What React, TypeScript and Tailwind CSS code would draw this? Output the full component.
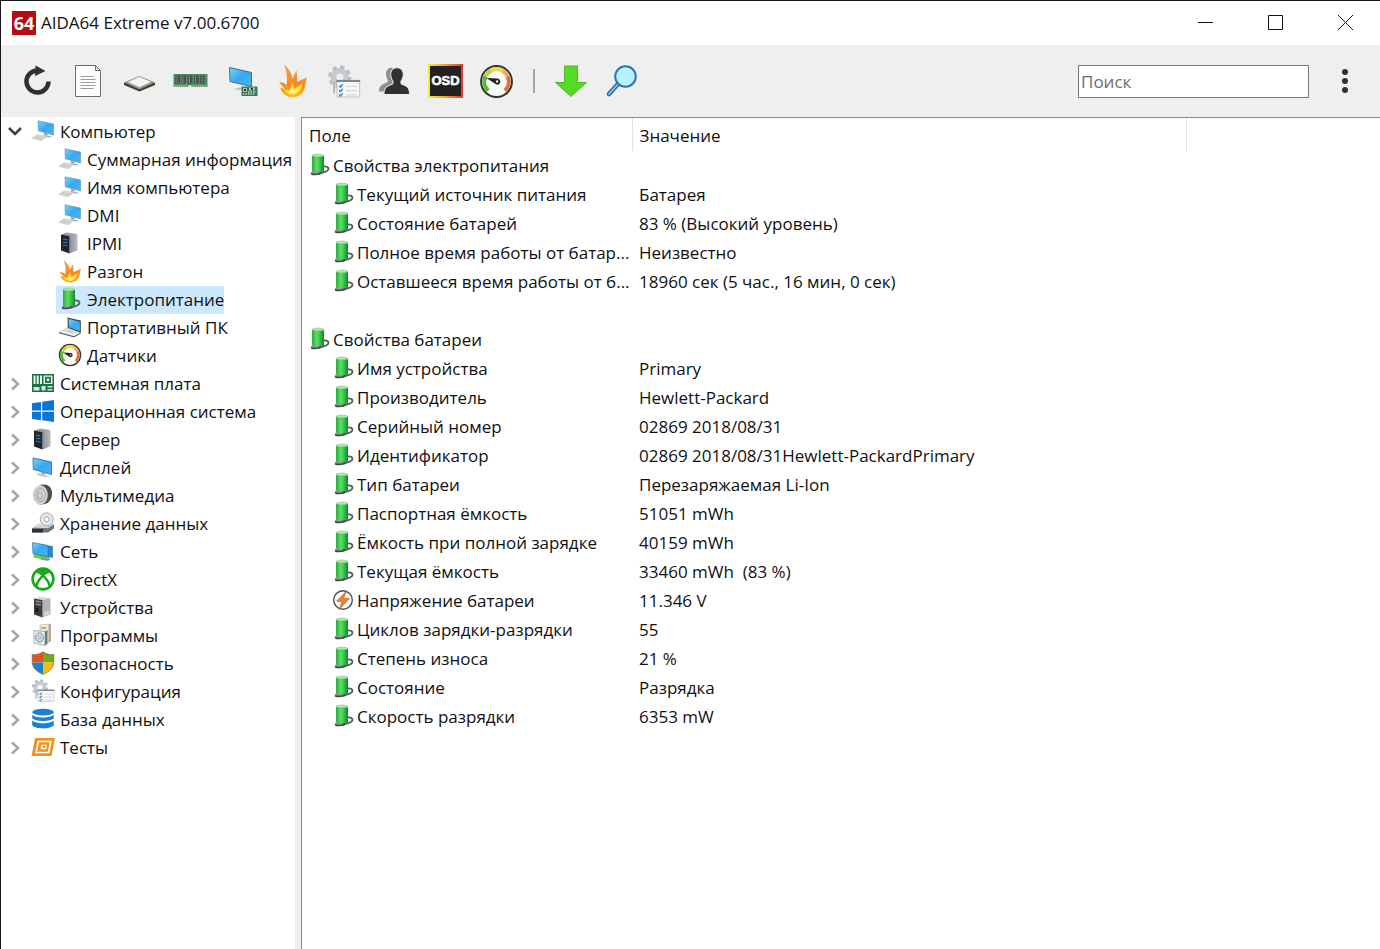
import React, { useState } from 'react';

type IconName =
  | 'computer'
  | 'server'
  | 'flame'
  | 'battery'
  | 'laptop'
  | 'gauge'
  | 'motherboard'
  | 'windows'
  | 'display'
  | 'speaker'
  | 'storage'
  | 'network'
  | 'xbox'
  | 'devices'
  | 'programs'
  | 'shield'
  | 'config'
  | 'database'
  | 'tests'
  | 'voltage';

interface TreeNode {
  label: string;
  icon: IconName;
  children?: TreeNode[];
}

interface Row {
  field: string;
  value?: string;
  icon?: IconName;
  group?: boolean;
}

const tree: TreeNode[] = [
  {
    label: 'Компьютер',
    icon: 'computer',
    children: [
      { label: 'Суммарная информация', icon: 'computer' },
      { label: 'Имя компьютера', icon: 'computer' },
      { label: 'DMI', icon: 'computer' },
      { label: 'IPMI', icon: 'server' },
      { label: 'Разгон', icon: 'flame' },
      { label: 'Электропитание', icon: 'battery' },
      { label: 'Портативный ПК', icon: 'laptop' },
      { label: 'Датчики', icon: 'gauge' },
    ],
  },
  { label: 'Системная плата', icon: 'motherboard' },
  { label: 'Операционная система', icon: 'windows' },
  { label: 'Сервер', icon: 'server' },
  { label: 'Дисплей', icon: 'display' },
  { label: 'Мультимедиа', icon: 'speaker' },
  { label: 'Хранение данных', icon: 'storage' },
  { label: 'Сеть', icon: 'network' },
  { label: 'DirectX', icon: 'xbox' },
  { label: 'Устройства', icon: 'devices' },
  { label: 'Программы', icon: 'programs' },
  { label: 'Безопасность', icon: 'shield' },
  { label: 'Конфигурация', icon: 'config' },
  { label: 'База данных', icon: 'database' },
  { label: 'Тесты', icon: 'tests' },
];

const rows: Row[] = [
  { field: 'Свойства электропитания', group: true },
  { field: 'Текущий источник питания', value: 'Батарея' },
  { field: 'Состояние батарей', value: '83 % (Высокий уровень)' },
  { field: 'Полное время работы от батар...', value: 'Неизвестно' },
  {
    field: 'Оставшееся время работы от б...',
    value: '18960 сек (5 час., 16 мин, 0 сек)',
  },
  { field: '' },
  { field: 'Свойства батареи', group: true },
  { field: 'Имя устройства', value: 'Primary' },
  { field: 'Производитель', value: 'Hewlett-Packard' },
  { field: 'Серийный номер', value: '02869 2018/08/31' },
  { field: 'Идентификатор', value: '02869 2018/08/31Hewlett-PackardPrimary' },
  { field: 'Тип батареи', value: 'Перезаряжаемая Li-Ion' },
  { field: 'Паспортная ёмкость', value: '51051 mWh' },
  { field: 'Ёмкость при полной зарядке', value: '40159 mWh' },
  { field: 'Текущая ёмкость', value: '33460 mWh  (83 %)' },
  { field: 'Напряжение батареи', value: '11.346 V', icon: 'voltage' },
  { field: 'Циклов зарядки-разрядки', value: '55' },
  { field: 'Степень износа', value: '21 %' },
  { field: 'Состояние', value: 'Разрядка' },
  { field: 'Скорость разрядки', value: '6353 mW' },
];

// Gradients shared by all icons
const IconDefs = () => (
  <svg className="absolute size-0" aria-hidden="true">
    <defs>
      <linearGradient id="screen" x1="0" y1="0" x2="1" y2="1">
        <stop offset="0" stopColor="#7fd0fa" />
        <stop offset="0.5" stopColor="#35a9f0" />
        <stop offset="1" stopColor="#4fb4ef" />
      </linearGradient>
      <linearGradient id="cell" x1="0" y1="0" x2="1" y2="0">
        <stop offset="0" stopColor="#2fa844" />
        <stop offset="0.4" stopColor="#5ae064" />
        <stop offset="0.7" stopColor="#2fc045" />
        <stop offset="1" stopColor="#168029" />
      </linearGradient>
      <linearGradient id="fire" x1="0" y1="0" x2="0" y2="1">
        <stop offset="0" stopColor="#f2a25a" />
        <stop offset="0.6" stopColor="#f9861c" />
        <stop offset="1" stopColor="#fdb51a" />
      </linearGradient>
      <linearGradient id="metal" x1="0" y1="0" x2="1" y2="0">
        <stop offset="0" stopColor="#8b8f94" />
        <stop offset="1" stopColor="#b9bcc0" />
      </linearGradient>
      <linearGradient id="osd" x1="0" y1="0" x2="1" y2="0">
        <stop offset="0" stopColor="#f4ea3a" />
        <stop offset="0.5" stopColor="#f0a030" />
        <stop offset="1" stopColor="#d83a34" />
      </linearGradient>
      <radialGradient id="cone">
        <stop offset="0" stopColor="#8a8a8a" />
        <stop offset="0.3" stopColor="#ececec" />
        <stop offset="0.7" stopColor="#b4b4b4" />
        <stop offset="1" stopColor="#f2f2f2" />
      </radialGradient>
    </defs>
  </svg>
);

const Flame = () => (
  <>
    <path
      d="M5.500 1c4 3 6 6.500 6.300 10L15 5c.3 3 .5 5.500.6 8L23 10c-1 2.500-1 4-1.500 6.500-1 4.500-4.500 7-9.500 7s-8.500-3-9.500-6.500c1.500.3 2.500.6 3.500 1.300L1.500 13c2 .3 4 .8 6 2.200C8 10 7.500 5.500 5.500 1z"
      fill="url(#fire)"
    />
    <path
      d="M11.500 12.500l2 5.500 6-4c-.5 4.500-3 7.500-7 8-3.500 0-5.500-1.500-7-3.500 2 .1 3 .3 3.700.8 1.500-2.300 2.300-4.300 2.300-6.800z"
      fill="#ffe03c"
    />
    <path d="M11.500 17l1.500 2.500 3-1.500c-1 2-2.300 2.800-3.800 2.800-1.200 0-2-.4-2.700-1.100z" fill="#fff4a8" />
  </>
);

const Gauge = () => (
  <>
    <circle cx="12" cy="12" r="10.600" fill="#fbfbf7" stroke="#34322c" strokeWidth="1.300" />
    <g fill="none" strokeWidth="2.800">
      <path d="M6.300 18.200A8.400 8.400 0 0 1 4.500 8.400" stroke="#56b83c" />
      <path d="M4.500 8.400A8.400 8.400 0 0 1 8.400 4.400" stroke="#b8d24a" />
      <path d="M8.400 4.400A8.400 8.400 0 0 1 16.200 4.700" stroke="#f4d64c" />
      <path d="M16.200 4.700A8.400 8.400 0 0 1 19.600 8.500" stroke="#f3a95c" />
      <path d="M19.600 8.500A8.400 8.400 0 0 1 17.700 18.200" stroke="#dc7242" />
    </g>
    <path d="M5 9.600l7.700.4a2.100 2.100 0 1 1-1.800 3.400z" fill="#25231f" />
    <circle cx="12.400" cy="12" r=".8" fill="#eee" />
  </>
);

const Config = () => (
  <>
    <circle cx="9" cy="8.500" r="4.500" fill="none" stroke="#c6cbd1" strokeWidth="4" />
    <circle
      cx="9"
      cy="8.500"
      r="7"
      fill="none"
      stroke="#b8bec5"
      strokeWidth="2.400"
      strokeDasharray="3 2.500"
    />
    <path d="M5 12v8" stroke="#9aa0a7" />
    <path d="M7 11.500h16v11H7z" fill="#f6f8fa" stroke="#b5babf" strokeWidth=".6" />
    <path d="M6.600 10.500h16.800v1.500H6.600z" fill="#7f868d" />
    <g fill="none" stroke="#3f8fce" strokeWidth="1.100">
      <path d="M8.500 14.500l1 1 1.600-2M8.500 17.700l1 1 1.600-2M8.500 20.800l1 1 1.600-2" />
    </g>
    <path d="M13.500 15h7.500M13.500 18h7.500M13.500 21h7.500" stroke="#d0d4d8" strokeWidth=".8" />
  </>
);

const Tower = ({ light }: { light?: boolean }) => (
  <>
    <path d="M3 3.500L9 1.500l10.500 1.700-6 2.300z" fill={light ? '#dcdcdc' : '#9da0a5'} />
    <path d="M11.500 5l8-1.800v16l-8 3.300z" fill={light ? '#b5b5b5' : 'url(#metal)'} />
    <path d="M3 3.500L11.500 5v17.500L3 19.500z" fill={light ? '#3c3c3a' : '#20242c'} />
    {light ? (
      <>
        <path d="M4.500 6l5.500 1M4.500 9l5.500 1" stroke="#8d8d8d" strokeWidth="1.400" />
        <path d="M4.500 12.500l3 .6v4.500l-3-.9z" fill="#1b1b1b" />
        <path d="M13 17l5.500-1.800v3.600l-5.500 2z" fill="#d6d6d6" />
      </>
    ) : (
      <path d="M5 8l4.500.9M5 11l4.500.9M5 14l4.500 1" stroke="#2e7bb4" strokeWidth="1.200" />
    )}
  </>
);

const glyphs: Record<IconName, React.ReactNode> = {
  computer: (
    <>
      <path d="M7 1.800L22.600 5v11L7.300 11.800z" fill="url(#screen)" stroke="#5b8fae" strokeWidth=".6" />
      <path d="M13 14l3.500.8v2l-3.500-1z" fill="#8e979e" />
      <path d="M11 16l8 1 2.500 1.200-5 .2z" fill="#adb3b8" />
      <path d="M6 15.800l9.500 1.900-5.500 4L.8 19.300z" fill="#dde0de" stroke="#b0b5b3" strokeWidth=".5" />
      <path d="M4.500 17.300l8.800 2M3 18.500l8.600 2" stroke="#a9b0ad" strokeWidth=".5" />
    </>
  ),
  laptop: (
    <>
      <path d="M9.500 2.500l13.300 3V18L9.800 13z" fill="#3c454e" />
      <path d="M10.600 4l11.200 2.700v9.600l-10.900-4z" fill="url(#screen)" />
      <path d="M9.300 13l13.200 5-6.500 3.500L1 17.500z" fill="#eceef0" stroke="#9ba1a6" strokeWidth=".6" />
      <path d="M9.500 14.500l8.500 3-2.500 1.200-9-2.600z" fill="#c8cdd1" />
      <path d="M1 17.800l15 4 6.500-3.500" fill="none" stroke="#50585f" />
    </>
  ),
  server: <Tower />,
  devices: <Tower light />,
  flame: <Flame />,
  battery: (
    <>
      <path d="M4 19c2-1.600 6-2.500 10-1.900l5 1.500-6 3.400-8-.4z" fill="#8b958f" />
      <path
        d="M16 13.500c4-.5 5.500.7 5.500 2.300 0 2-3.500 3.500-9 4.300"
        fill="none"
        stroke="#56605b"
        strokeWidth="1.900"
      />
      <path d="M5 2.500h12V18c-1.500 1.500-10.400 1.500-12 0z" fill="url(#cell)" />
      <ellipse cx="11" cy="2.500" rx="6" ry="1.400" fill="#b4e6b2" stroke="#6cb870" strokeWidth=".5" />
      <path d="M4 20.500c2 1.500 7 1.500 10-.8" fill="none" stroke="#3f4a44" strokeWidth="1.600" />
    </>
  ),
  gauge: <Gauge />,
  motherboard: (
    <>
      <path d="M1 3h22v18H1z" fill="#1d7044" />
      <path d="M2.500 4.500h2V13h-2zM5.700 4.500h2V13h-2zM9 4.500h2V13H9z" fill="#e8f2e9" />
      <path d="M12.500 4.500h9v8.500h-9z" fill="#e8f2e9" />
      <path d="M14 5.800h6v6h-6z" fill="#1d7044" />
      <path d="M15.700 7.500h2.600v2.600h-2.600z" fill="#e8f2e9" />
      <path d="M2.500 16h6v3.500h-6zM10.500 15h4v4.500h-4zM16.500 15h5v1.600h-5zM16.500 18h5v1.500h-5z" fill="#d5e8d8" />
    </>
  ),
  windows: (
    <path
      d="M1 4.200l9-1.300v8.600H1zM11.200 2.700L23 1v10.500H11.200zM1 12.700h9v8.500l-9-1.300zM11.200 12.700H23V23l-11.800-1.700z"
      fill="#0a76d0"
    />
  ),
  display: (
    <>
      <path d="M2 3l18.500 4v12.500L2.300 14.300z" fill="url(#screen)" stroke="#39749c" strokeWidth=".9" />
      <path d="M5 17.500l14 4-4 .7-8-1.900z" fill="#c3c9cd" />
      <path d="M10 16.800l4 1v2l-4-1z" fill="#98a1a8" />
    </>
  ),
  speaker: (
    <>
      <path d="M9 2c7-1.500 12 1 12 8.500S16 22 9 21.500z" fill="#4e4e4e" />
      <ellipse cx="9.500" cy="12" rx="7" ry="9.500" fill="url(#cone)" stroke="#b5b5b5" strokeWidth=".8" />
      <ellipse cx="9" cy="12.500" rx="2.500" ry="3.400" fill="#d4d4d4" stroke="#8f8f8f" strokeWidth=".8" />
    </>
  ),
  storage: (
    <>
      <path d="M1 17.500L8 13l15 .5v4L17 21.500H1z" fill="#6d7276" />
      <path d="M1 16.500l7-4 15 .8-6 4z" fill="#d5d8da" />
      <path d="M1 18h11v3.500H1z" fill="#303336" />
      <circle cx="15.700" cy="8.300" r="6.500" fill="#e4e7e9" stroke="#a7adb2" />
      <circle cx="15.700" cy="8.300" r="2.400" fill="#fff" stroke="#9da4a9" />
    </>
  ),
  network: (
    <>
      <path d="M2.500 14l16 4v3.500l-16-3z" fill="#63cf45" />
      <path d="M9 5.500l12.500 2v11L9 16z" fill="#2389d2" stroke="#216a9c" strokeWidth=".6" />
      <path d="M1.500 3.500L17 6.500v11L2 14.500z" fill="url(#screen)" stroke="#3a7ca8" strokeWidth=".8" />
      <path d="M12 19l8 1.500-4 1.200-7-1.300z" fill="#81959a" />
    </>
  ),
  xbox: (
    <>
      <circle cx="12" cy="12" r="10.400" fill="#fff" stroke="#18a818" strokeWidth="2.600" />
      <path
        d="M5.300 4.800c2.500 0 4.700 1.500 6.700 3.200 2-1.700 4.200-3.200 6.700-3.200M5 19.500c1-4 3.500-7.800 7-10.900 3.500 3.100 6 6.900 7 10.900"
        fill="none"
        stroke="#18a818"
        strokeWidth="2.600"
      />
      <path d="M7 3.500Q12 1 17 3.500L12 7z" fill="#18a818" />
    </>
  ),
  programs: (
    <>
      <path d="M9 2l10-1v17l-4 2-6-1z" fill="#efe8d8" stroke="#b3afa2" strokeWidth=".6" />
      <path d="M17.500 1.500l2.500-.5v17l-2.500 2z" fill="#b0a896" />
      <path d="M3 7.500l11 1v14L3 20z" fill="#edf0f1" stroke="#8b9399" strokeWidth=".7" />
      <path d="M14 8.500L16.500 7v14L14 22.500z" fill="#6f777e" />
      <ellipse cx="8.500" cy="14.500" rx="3.900" ry="4.600" fill="#c8dbe8" stroke="#8093a2" />
      <circle cx="8.500" cy="14.500" r="1.300" fill="#fff" stroke="#6d8191" strokeWidth=".6" />
      <path d="M10 4h5v1.800h-5z" fill="#d0a557" />
    </>
  ),
  shield: (
    <>
      <path d="M12 .8C9 3 5.500 3.800 1.200 3.600V11.500H12z" fill="#e8501f" />
      <path d="M12 .8c3 2.200 6.500 3 10.800 2.800V11.500H12z" fill="#6cab1b" />
      <path d="M1.200 11.500H12v12C6 20.500 1.500 17 1.200 11.500z" fill="#1d82cc" />
      <path d="M22.800 11.500H12v12c6-3 10.500-6.500 10.800-12z" fill="#fbb914" />
      <path
        d="M12 .8C9 3 5.500 3.800 1.200 3.600V11c0 6 4.800 9.800 10.800 12.500 6-2.700 10.800-6.500 10.800-12.500V3.600C18.500 3.800 15 3 12 .8z"
        fill="none"
        stroke="#77694d"
        strokeWidth=".7"
      />
    </>
  ),
  config: <Config />,
  database: (
    <>
      <ellipse cx="12" cy="5.200" rx="10.800" ry="3.400" fill="#1c80d6" />
      <path d="M1.200 7.500c2 4 19.600 4 21.600 0v3.600c-2 4-19.600 4-21.600 0z" fill="#1c80d6" />
      <path d="M1.200 13.200c2 4 19.600 4 21.600 0V18c-2 4.500-19.600 4.500-21.600 0z" fill="#1c80d6" />
    </>
  ),
  tests: (
    <>
      <path d="M4 3h20l-3.500 18H.5z" fill="#f0931f" />
      <path d="M7.300 6.500h12.400l-2.100 11H5.200z" fill="none" stroke="#fff" strokeWidth="1.700" />
      <path d="M10.500 9.800h5.500l-.8 4.400H9.700z" fill="#fff" />
      <path d="M11.800 11h2.800l-.4 2h-2.800z" fill="#f0931f" />
    </>
  ),
  voltage: (
    <>
      <circle cx="12" cy="12" r="9.300" fill="#fff" stroke="#4e4a45" strokeWidth="1.400" />
      <path d="M15.500 3L5.500 13.200l5.700.2-3 8L18.500 10.500l-6-.3z" fill="#e88732" stroke="#b9622a" strokeWidth=".7" />
    </>
  ),
};

const Icon = ({ name }: { name: IconName }) => (
  <svg viewBox="0 0 24 24" className="mb-[2px] size-6 shrink-0" aria-hidden="true">
    {glyphs[name]}
  </svg>
);

const tools: { label: string; art: React.ReactNode }[] = [
  {
    label: 'Обновить',
    art: (
      <>
        <path d="M17.500 7.500A11 11 0 1 0 29.500 18.500" fill="none" stroke="#303030" strokeWidth="4.500" />
        <path d="M16.500 2.500l10 5.500-10.500 5z" fill="#303030" />
      </>
    ),
  },
  {
    label: 'Отчёт',
    art: (
      <>
        <path d="M5.500 2.500h20l5 5v26h-25z" fill="#fdfdfd" stroke="#6b6b6b" />
        <path d="M25.500 2.500v5h5z" fill="#e2e2e2" stroke="#6b6b6b" />
        <path d="M10.500 13.500h13M10.500 16.500h15M10.500 19.500h15M10.500 22.500h15M10.500 25.500h13" stroke="#9a9a9a" />
      </>
    ),
  },
  {
    label: 'ЦП',
    art: (
      <>
        <path d="M3 20l15.500-6.500L34 20v2l-15.500 6.500L3 22z" fill="#3b4030" />
        <path d="M3 19.500L18.500 13 34 19.500l-15.500 7z" fill="#89907c" />
        <path d="M6.500 19l12-5.500 12 5.500-12 5.500z" fill="#f5f5f3" stroke="#a9aaa2" strokeWidth=".7" />
      </>
    ),
  },
  {
    label: 'Память',
    art: (
      <>
        <path d="M1.500 11h34v13h-34z" fill="#4d8a69" />
        <path d="M3.500 12.500h4.500v8H3.500zM9.500 12.500H14v8H9.500zM15.800 12.500h4.500v8h-4.500zM22 12.500h4.500v8H22zM28 12.500h4.500v8H28z" fill="#48514b" />
        <path d="M5 13v7M11 13v7M17.500 13v7M23.500 13v7M30 13v7" stroke="#7f8b83" />
        <path d="M2 23h13M19 23h16" stroke="#c9c384" strokeWidth="1.500" strokeDasharray="1.500 .8" />
        <path d="M16 22.500h3V24h-3z" fill="#efefef" />
      </>
    ),
  },
  {
    label: 'Видео',
    art: (
      <g transform="translate(4 0)">
        <path d="M2.500 4.500l22 5v14L3 18.500z" fill="url(#screen)" stroke="#3b7198" />
        <path d="M7 26l9-2 4 2-8 1z" fill="#b7bdc1" />
        <path d="M14.500 23.500h16v9.500h-16z" fill="#3c765a" />
        <path d="M16 25h4v4h-4zM22 24.500h6v3h-6z" fill="#a9c5b2" />
        <path d="M21 29h8M16 31h12" stroke="#c5d1b2" strokeWidth="1.500" strokeDasharray="1.500 1" />
        <path d="M17 26h2v2h-2zM24 25h2v2h-2z" fill="#293d33" />
      </g>
    ),
  },
  {
    label: 'Разгон',
    art: (
      <g transform="translate(3 0) scale(1.300 1.450)">
        <Flame />
      </g>
    ),
  },
  {
    label: 'Настройка',
    art: (
      <g transform="translate(2 2) scale(1.420)">
        <Config />
      </g>
    ),
  },
  {
    label: 'Пользователи',
    art: (
      <>
        <path
          d="M3 28.500c0-5.500 2.500-7 8.500-9.500l.3-2C8.500 11 10 5 15.500 4.500L20 8v20.500z"
          fill="#8f8f8f"
        />
        <path
          d="M8 31.500c0-6.500 2-8 8.800-10.500l.4-2.500c-4.500-6-2.700-13.800 3.800-13.800s8.300 7.800 3.800 13.800l.4 2.500c6.800 2.500 8.300 4 8.300 10.500z"
          fill="#303030"
          stroke="#efefef"
        />
      </>
    ),
  },
  {
    label: 'OSD',
    art: (
      <>
        <path d="M1 1h35v34H1z" fill="url(#osd)" />
        <path d="M3 3h31v30H3z" fill="#242021" />
        <text
          x="18.500"
          y="22"
          textAnchor="middle"
          fill="#fff"
          stroke="#fff"
          strokeWidth=".6"
          className="font-['Liberation_Sans',sans-serif] text-[13px] font-bold"
        >
          OSD
        </text>
      </>
    ),
  },
  {
    label: 'Датчики',
    art: (
      <g transform="translate(1 1) scale(1.460)">
        <Gauge />
      </g>
    ),
  },
];

const updateTools: { label: string; art: React.ReactNode }[] = [
  {
    label: 'Обновление',
    art: <path d="M11.500 3h13v16.500h9L18 33.500 2.500 19.500h9z" fill="#55dc22" stroke="#50b52c" />,
  },
  {
    label: 'Найти',
    art: (
      <>
        <path d="M14.500 20.500L5 31" stroke="#2468a8" strokeWidth="4.500" strokeLinecap="round" />
        <path d="M14.500 20.500L5 31" stroke="#91c5ee" strokeWidth="1.800" strokeLinecap="round" />
        <circle cx="21.500" cy="13.500" r="10.300" fill="#b4f3ff" stroke="#2c75b5" strokeWidth="2" />
      </>
    ),
  },
];

const ToolButton = ({ label, art }: { label: string; art: React.ReactNode }) => (
  <button type="button" aria-label={label} className="flex h-12 w-[51px] items-center justify-center">
    <svg viewBox="0 0 37 36" className="h-9 w-[37px]" aria-hidden="true">
      {art}
    </svg>
  </button>
);

const Chevron = ({ open }: { open?: boolean }) => (
  <svg viewBox="0 0 16 16" className="size-4" fill="none" strokeWidth="2.500" aria-hidden="true">
    {open ? (
      <path d="M2 4l6 6 6-6" stroke="#404040" />
    ) : (
      <path d="M5 2.500l6 5.500-6 5.500" stroke="#a6a6a6" />
    )}
  </svg>
);

const TitleBar = () => (
  <header className="flex h-11 items-center bg-white pl-[11px]">
    <span className="flex size-6 items-center justify-center bg-[#b30d12] text-[18px] leading-6 font-bold text-white">
      64
    </span>
    <h1 className="ml-[5px] flex-1">AIDA64 Extreme v7.00.6700</h1>
    <div className="flex h-full">
      {[
        { label: 'Свернуть', d: 'M1 8.500h15' },
        { label: 'Развернуть', d: 'M1.500 1.500h14v14h-14z' },
        { label: 'Закрыть', d: 'M1 1l15 15M16 1L1 16' },
      ].map((button) => (
        <button
          key={button.label}
          type="button"
          aria-label={button.label}
          className="flex w-[70px] items-center justify-center pb-[2px]"
        >
          <svg viewBox="0 0 17 17" className="size-[17px]" fill="none" stroke="#111">
            <path d={button.d} />
          </svg>
        </button>
      ))}
    </div>
  </header>
);

const Toolbar = () => (
  <div className="flex h-[72px] items-center bg-[#efefef] pl-[11px]">
    {tools.map((tool) => (
      <ToolButton key={tool.label} {...tool} />
    ))}
    <div className="flex w-6 justify-center">
      <div className="h-6 w-0.5 bg-[#a3a3a3]" />
    </div>
    {updateTools.map((tool) => (
      <ToolButton key={tool.label} {...tool} />
    ))}
    <input
      type="text"
      aria-label="Поиск"
      placeholder="Поиск"
      className="ml-auto h-[33px] w-[231px] border border-[#7a7a7a] bg-white px-[2px] placeholder:text-[#6d6d6d]"
    />
    <button type="button" aria-label="Меню" className="mr-[10px] ml-[10px] flex w-[51px] justify-center">
      <svg viewBox="0 0 8 26" className="h-[26px] w-2" fill="#303030" aria-hidden="true">
        <circle cx="4" cy="4" r="3" />
        <circle cx="4" cy="13" r="3" />
        <circle cx="4" cy="22" r="3" />
      </svg>
    </button>
  </div>
);

const App: React.FC = () => {
  const [selected, setSelected] = useState('Электропитание');
  const [open, setOpen] = useState(true);

  const renderLabel = (node: TreeNode) => (
    <button
      type="button"
      onClick={() => setSelected(node.label)}
      className={`flex h-7 items-center gap-[5px] pl-[2px] whitespace-nowrap ${
        selected === node.label ? 'bg-[#cce8ff]' : ''
      }`}
    >
      <Icon name={node.icon} />
      {node.label}
    </button>
  );

  return (
    <div className="flex min-h-screen flex-col border-t border-l border-[#1a1518] bg-white font-['Open_Sans','Noto_Sans',sans-serif] text-[17px] leading-6 text-[#111]">
      <IconDefs />
      <TitleBar />
      <Toolbar />

      <main className="flex flex-1">
        {/* Tree */}
        <nav className="w-[294px] shrink-0 overflow-hidden pt-px">
          <ul>
            {tree.map((node) => (
              <li key={node.label}>
                <div className="flex h-7 items-center pl-[6px]">
                  <button
                    type="button"
                    aria-label={node.label}
                    aria-expanded={node.children ? open : false}
                    onClick={() => node.children && setOpen(!open)}
                    className="mr-[6px]"
                  >
                    <Chevron open={!!node.children && open} />
                  </button>
                  {renderLabel(node)}
                </div>
                {node.children && open && (
                  <ul className="pl-[55px]">
                    {node.children.map((child) => (
                      <li key={child.label}>{renderLabel(child)}</li>
                    ))}
                  </ul>
                )}
              </li>
            ))}
          </ul>
        </nav>

        {/* Splitter */}
        <div className="w-[6px] shrink-0 bg-[#efefef]" />

        {/* Details */}
        <section className="min-w-0 flex-1 border-t border-l border-[#828790]">
          <table className="w-full table-fixed text-left">
            <colgroup>
              <col className="w-[330px]" />
              <col className="w-[554px]" />
              <col />
            </colgroup>
            <thead>
              <tr className="h-[33px]">
                <th scope="col" className="border-r border-[#e0e0e0] pt-[2px] pl-[7px] font-normal">
                  Поле
                </th>
                <th scope="col" className="border-r border-[#e0e0e0] pt-[2px] pl-[7px] font-normal">
                  Значение
                </th>
                <td />
              </tr>
            </thead>
            <tbody>
              {rows.map((row, index) => (
                <tr key={index} className="h-[29px]">
                  <td className="whitespace-nowrap">
                    {row.field && (
                      <div className={`flex items-center ${row.group ? 'pl-[5px]' : 'pl-[29px]'}`}>
                        <Icon name={row.icon ?? 'battery'} />
                        <span className="ml-[2px]">{row.field}</span>
                      </div>
                    )}
                  </td>
                  <td className="pl-[7px] whitespace-pre">{row.value}</td>
                  <td />
                </tr>
              ))}
            </tbody>
          </table>
        </section>
      </main>
    </div>
  );
};

export default App;
